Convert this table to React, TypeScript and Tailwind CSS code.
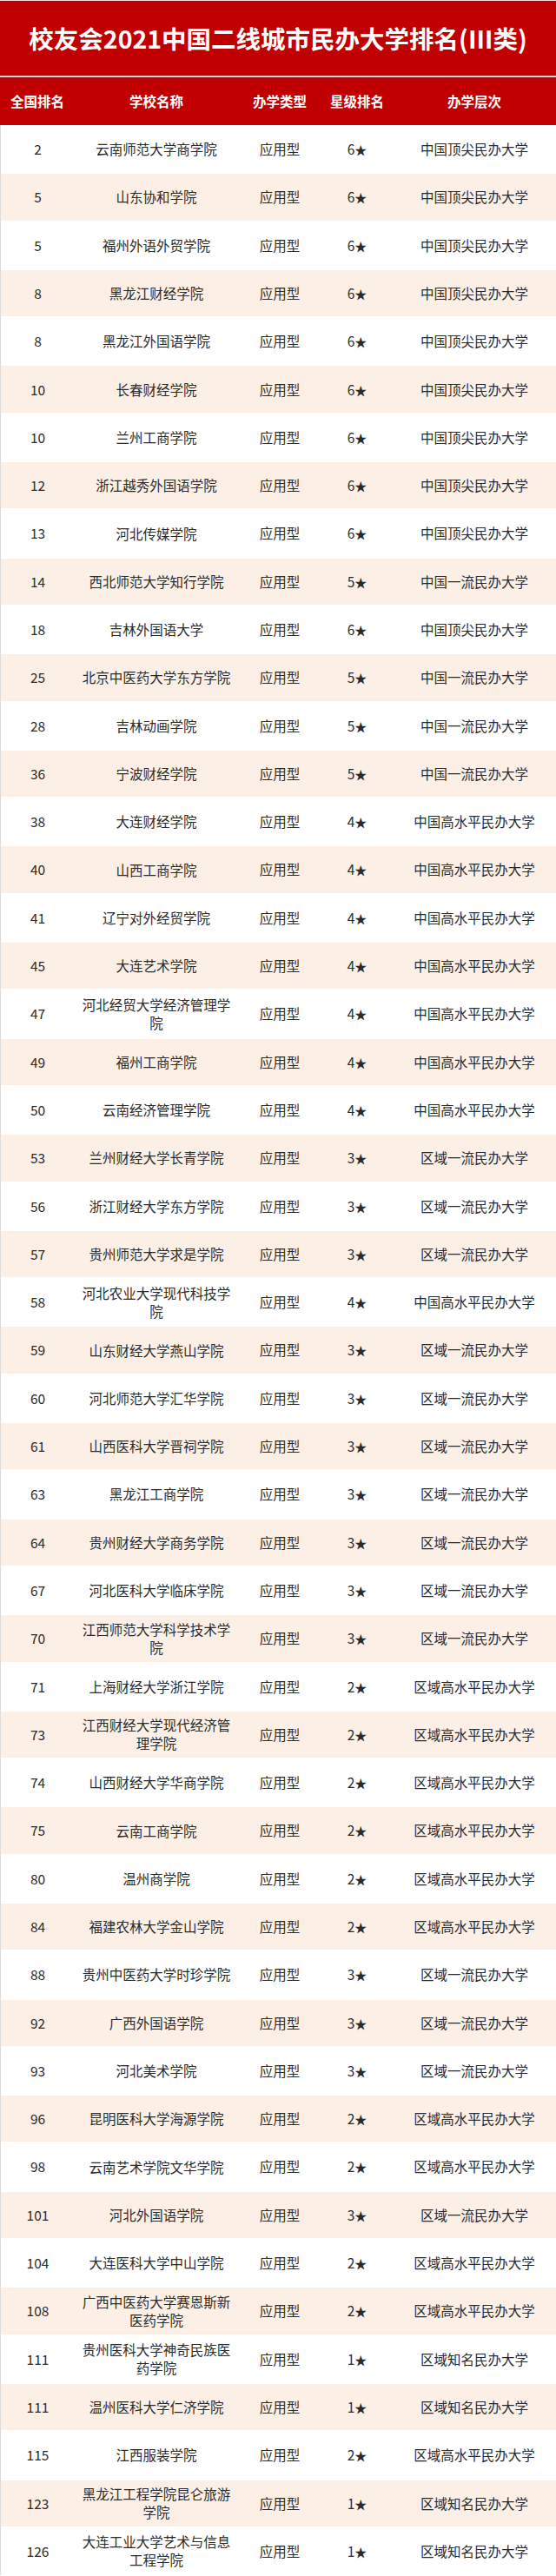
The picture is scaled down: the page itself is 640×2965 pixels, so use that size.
import React from "react";

type Row = [string, string, string, string];

const rows: Row[] = [
  ["2", "云南师范大学商学院", "6", "中国顶尖民办大学"],
  ["5", "山东协和学院", "6", "中国顶尖民办大学"],
  ["5", "福州外语外贸学院", "6", "中国顶尖民办大学"],
  ["8", "黑龙江财经学院", "6", "中国顶尖民办大学"],
  ["8", "黑龙江外国语学院", "6", "中国顶尖民办大学"],
  ["10", "长春财经学院", "6", "中国顶尖民办大学"],
  ["10", "兰州工商学院", "6", "中国顶尖民办大学"],
  ["12", "浙江越秀外国语学院", "6", "中国顶尖民办大学"],
  ["13", "河北传媒学院", "6", "中国顶尖民办大学"],
  ["14", "西北师范大学知行学院", "5", "中国一流民办大学"],
  ["18", "吉林外国语大学", "6", "中国顶尖民办大学"],
  ["25", "北京中医药大学东方学院", "5", "中国一流民办大学"],
  ["28", "吉林动画学院", "5", "中国一流民办大学"],
  ["36", "宁波财经学院", "5", "中国一流民办大学"],
  ["38", "大连财经学院", "4", "中国高水平民办大学"],
  ["40", "山西工商学院", "4", "中国高水平民办大学"],
  ["41", "辽宁对外经贸学院", "4", "中国高水平民办大学"],
  ["45", "大连艺术学院", "4", "中国高水平民办大学"],
  ["47", "河北经贸大学经济管理学院", "4", "中国高水平民办大学"],
  ["49", "福州工商学院", "4", "中国高水平民办大学"],
  ["50", "云南经济管理学院", "4", "中国高水平民办大学"],
  ["53", "兰州财经大学长青学院", "3", "区域一流民办大学"],
  ["56", "浙江财经大学东方学院", "3", "区域一流民办大学"],
  ["57", "贵州师范大学求是学院", "3", "区域一流民办大学"],
  ["58", "河北农业大学现代科技学院", "4", "中国高水平民办大学"],
  ["59", "山东财经大学燕山学院", "3", "区域一流民办大学"],
  ["60", "河北师范大学汇华学院", "3", "区域一流民办大学"],
  ["61", "山西医科大学晋祠学院", "3", "区域一流民办大学"],
  ["63", "黑龙江工商学院", "3", "区域一流民办大学"],
  ["64", "贵州财经大学商务学院", "3", "区域一流民办大学"],
  ["67", "河北医科大学临床学院", "3", "区域一流民办大学"],
  ["70", "江西师范大学科学技术学院", "3", "区域一流民办大学"],
  ["71", "上海财经大学浙江学院", "2", "区域高水平民办大学"],
  ["73", "江西财经大学现代经济管理学院", "2", "区域高水平民办大学"],
  ["74", "山西财经大学华商学院", "2", "区域高水平民办大学"],
  ["75", "云南工商学院", "2", "区域高水平民办大学"],
  ["80", "温州商学院", "2", "区域高水平民办大学"],
  ["84", "福建农林大学金山学院", "2", "区域高水平民办大学"],
  ["88", "贵州中医药大学时珍学院", "3", "区域一流民办大学"],
  ["92", "广西外国语学院", "3", "区域一流民办大学"],
  ["93", "河北美术学院", "3", "区域一流民办大学"],
  ["96", "昆明医科大学海源学院", "2", "区域高水平民办大学"],
  ["98", "云南艺术学院文华学院", "2", "区域高水平民办大学"],
  ["101", "河北外国语学院", "3", "区域一流民办大学"],
  ["104", "大连医科大学中山学院", "2", "区域高水平民办大学"],
  ["108", "广西中医药大学赛恩斯新医药学院", "2", "区域高水平民办大学"],
  ["111", "贵州医科大学神奇民族医药学院", "1", "区域知名民办大学"],
  ["111", "温州医科大学仁济学院", "1", "区域知名民办大学"],
  ["115", "江西服装学院", "2", "区域高水平民办大学"],
  ["123", "黑龙江工程学院昆仑旅游学院", "1", "区域知名民办大学"],
  ["126", "大连工业大学艺术与信息工程学院", "1", "区域知名民办大学"],
];

const font = {
  fontFamily: '"Noto Sans CJK SC", "Noto Sans", sans-serif',
};

export default function App() {
  return (
    <div className="w-[640px] bg-white" style={font}>
      <div className="h-[87px] bg-[#c00000] border-t border-[#f3d6d6] flex items-center justify-center">
        <h1 className="text-white font-bold text-[28.5px] leading-none">
          校友会2021中国二线城市民办大学排名(Ⅲ类)
        </h1>
      </div>
      <div className="h-[2px] bg-[#f6e4e4]" />
      <div className="h-[55px] bg-[#c00000] grid grid-cols-[86px_188px_96px_82px_188px] items-center text-center text-white font-bold text-[15.5px]">
        <div>全国排名</div>
        <div>学校名称</div>
        <div>办学类型</div>
        <div>星级排名</div>
        <div>办学层次</div>
      </div>
      <div className="border-l border-[#dcdcdc]">
        {rows.map((r, i) => (
          <div
            key={i}
            className={
              "h-[55.31px] grid grid-cols-[85px_188px_96px_82px_188px] items-center text-center text-[15.5px] text-[#2a2a2a] border-y-[1.5px] border-white " +
              (i % 2 === 1 ? "bg-[#fcf0e6]" : "bg-white")
            }
          >
            <div>{r[0]}</div>
            <div className="px-2 leading-[21px]">{r[1]}</div>
            <div>应用型</div>
            <div>
              {r[2]}
              <span className="text-[14px]">★</span>
            </div>
            <div>{r[3]}</div>
          </div>
        ))}
      </div>
    </div>
  );
}
